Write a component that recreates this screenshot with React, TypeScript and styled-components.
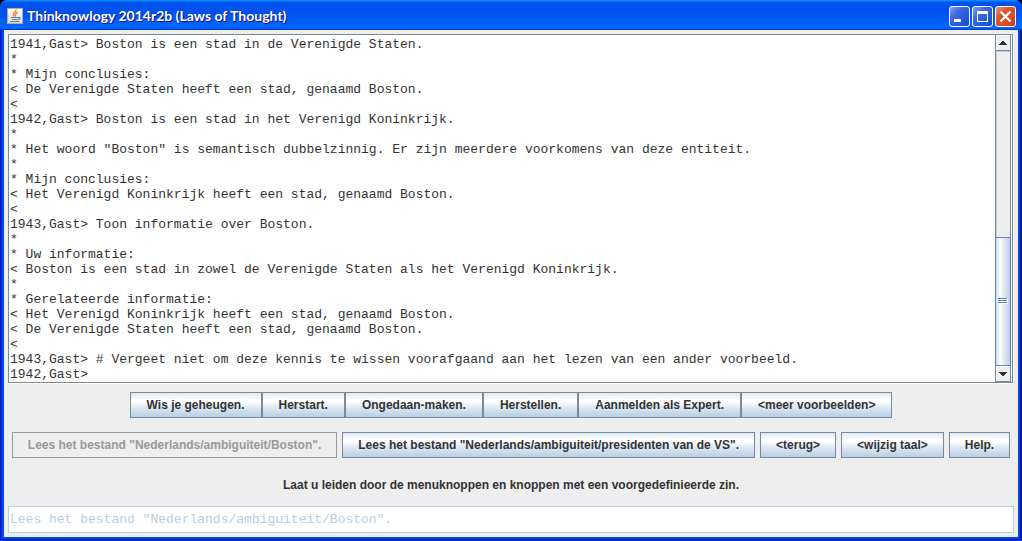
import React from "react";
import styled, { createGlobalStyle, css } from "styled-components";

const GlobalStyle = createGlobalStyle`
  *, *::before, *::after { box-sizing: border-box; }
  body { margin: 0; background: #000; }
`;

const mono = css`
  font-family: "Liberation Mono", "Courier New", monospace;
  font-size: 13px;
  line-height: 15px;
`;

const sans = css`
  font-family: "Liberation Sans", Arial, sans-serif;
  font-size: 12px;
  font-weight: 700;
  line-height: 16px;
`;

const Frame = styled.div`
  display: flex;
  flex-direction: column;
  min-height: 100vh;
  padding: 0 4px 4px;
  border-radius: 7px 7px 0 0;
  overflow: hidden;
  background: #0046e6;
  box-shadow: inset 1px 0 #0019cf, inset 2px -1px #0831d9, inset -1px -1px #00138c, inset -2px -2px #001ea0;
`;

const TitleBar = styled.header`
  display: flex;
  align-items: center;
  gap: 4px;
  height: 30px;
  margin: 0 -4px;
  padding: 2px 6px 0 7px;
  background: linear-gradient(
    #0997ff 0,
    #0053ee 8%,
    #0050ee 40%,
    #0066ff 88%,
    #0066ff 93%,
    #005bff 95%,
    #003dd7 96%,
    #003dd7 100%
  );
`;

const Title = styled.h1`
  flex: 1;
  margin: 0;
  font-family: "Trebuchet MS", Lato, sans-serif;
  font-size: 14px;
  font-weight: 700;
  line-height: 20px;
  color: #fff;
  text-shadow: 1px 1px #0f1089;
`;

const WindowControls = styled.div`
  display: flex;
  gap: 2px;
`;

const ControlButton = styled.button<{ $close?: boolean }>`
  display: grid;
  place-items: center;
  width: 21px;
  height: 21px;
  padding: 0;
  border: 1px solid #fff;
  border-radius: 3px;
  background: ${({ $close }) =>
    $close
      ? "linear-gradient(135deg, #ee9478 0, #e0532f 35%, #dc4a20 70%, #c23a10)"
      : "linear-gradient(135deg, #7fa2f2 0, #3a68e0 35%, #2459dc 70%, #1a4cc8)"};
`;

const Content = styled.main`
  display: flex;
  flex: 1;
  flex-direction: column;
  padding: 4px;
  background: #eee;
`;

const LogPane = styled.section`
  display: flex;
  flex: 1;
  margin-right: 1px;
  border: 1px solid #7a8a99;
  background: #fff;
  box-shadow: 1px 1px #fff;
`;

const LogText = styled.pre`
  ${mono}
  flex: 1;
  margin: 0;
  padding: 2px 1px 0;
  overflow: hidden;
  color: #333;
`;

const ScrollBar = styled.div`
  display: flex;
  flex-direction: column;
  width: 16px;
  margin-right: 1px;
  border: solid #7a8a99;
  border-width: 0 1px;
  background: #eee;
`;

const ScrollArrow = styled.button`
  display: grid;
  place-items: center;
  height: 16px;
  padding: 0;
  border: 0 solid #7a8a99;
  border-bottom-width: 1px;
  background: #eee;
  box-shadow: inset 1px 1px #fff;
`;

const ScrollTrack = styled.div`
  display: flex;
  flex: 1;
  flex-direction: column;
  justify-content: flex-end;
  box-shadow: inset 1px 1px #b8cfe5;
`;

const ScrollThumb = styled.div`
  display: grid;
  place-items: center;
  height: 41%;
  margin: 0 -1px;
  border: 1px solid #6382bf;
  background: linear-gradient(90deg, #c8ddf2, #fff 30%, #dce8f3 60%, #b8cfe5);
`;

const MetalButton = styled.button`
  ${sans}
  height: 26px;
  padding: 0 16px;
  border: 1px solid #7a8a99;
  background: linear-gradient(#dde8f3, #fff 30%, #fff 35%, #dde8f3 60%, #b8cfe5);
  color: #333;
  white-space: nowrap;

  &:disabled {
    border-color: #999;
    background: #eee;
    color: #999;
  }
`;

const ButtonRow = styled.div<{ $spaced?: boolean }>`
  display: flex;
  justify-content: center;
  gap: ${({ $spaced }) => ($spaced ? 5 : 0)}px;

  ${MetalButton} {
    padding: 0 ${({ $spaced }) => ($spaced ? 15 : 16)}px;
  }
`;

const Controls = styled.div`
  display: flex;
  flex-direction: column;
  gap: 14px;
  padding: 9px 0 13px;
`;

const Hint = styled.label`
  ${sans}
  margin-top: 5px;
  text-align: center;
  color: #333;
`;

const SentenceInput = styled.input`
  ${mono}
  width: 100%;
  height: 27px;
  padding: 0 1px;
  border: 1px solid #b8cfe5;
  background: #fff;
  color: #b8cfe5;
`;

const LOG = `1941,Gast> Boston is een stad in de Verenigde Staten.
*
* Mijn conclusies:
< De Verenigde Staten heeft een stad, genaamd Boston.
<
1942,Gast> Boston is een stad in het Verenigd Koninkrijk.
*
* Het woord "Boston" is semantisch dubbelzinnig. Er zijn meerdere voorkomens van deze entiteit.
*
* Mijn conclusies:
< Het Verenigd Koninkrijk heeft een stad, genaamd Boston.
<
1943,Gast> Toon informatie over Boston.
*
* Uw informatie:
< Boston is een stad in zowel de Verenigde Staten als het Verenigd Koninkrijk.
*
* Gerelateerde informatie:
< Het Verenigd Koninkrijk heeft een stad, genaamd Boston.
< De Verenigde Staten heeft een stad, genaamd Boston.
<
1943,Gast> # Vergeet niet om deze kennis te wissen voorafgaand aan het lezen van een ander voorbeeld.
1942,Gast>`;

const ACTIONS = [
  "Wis je geheugen.",
  "Herstart.",
  "Ongedaan-maken.",
  "Herstellen.",
  "Aanmelden als Expert.",
  "<meer voorbeelden>",
];

const EXAMPLES = [
  { label: 'Lees het bestand "Nederlands/ambiguiteit/Boston".', disabled: true },
  { label: 'Lees het bestand "Nederlands/ambiguiteit/presidenten van de VS".' },
  { label: "<terug>" },
  { label: "<wijzig taal>" },
  { label: "Help." },
];

function JavaIcon() {
  return (
    <svg width="16" height="16" viewBox="0 0 16 16" aria-hidden="true">
      <defs>
        <linearGradient id="tile" x1="0" y1="0" x2="0" y2="1">
          <stop offset="0" stopColor="#fff" />
          <stop offset="1" stopColor="#dcdcdc" />
        </linearGradient>
      </defs>
      <rect x="0.5" y="0.5" width="15" height="15" fill="url(#tile)" stroke="#b4aca0" />
      <path d="M9 1.500C9.500 4 4.500 5 7 8.500M10.500 4C7.500 5.500 9.500 6.500 8 8.500" fill="none" stroke="#ee8a35" strokeWidth="1.500" />
      <path d="M4 9.500h7M5 11.500h5.500M3 13.500h9.500M11 9.500c3-.5 2.500 1.500 0 2" fill="none" stroke="#5a7f9f" strokeWidth="1.100" />
    </svg>
  );
}

function Arrow({ down }: { down?: boolean }) {
  return (
    <svg width="8" height="4" viewBox="0 0 8 4" shapeRendering="crispEdges" aria-hidden="true">
      <path d={down ? "M0 0h8v1H7v1H6v1H5v1H3V3H2V2H1V1H0z" : "M0 4h8V3H7V2H6V1H5V0H3v1H2v1H1v1H0z"} fill="#333" />
    </svg>
  );
}

export default function App() {
  return (
    <>
      <GlobalStyle />
      <Frame>
        <TitleBar>
          <JavaIcon />
          <Title>Thinknowlogy 2014r2b (Laws of Thought)</Title>
          <WindowControls>
            <ControlButton aria-label="Minimize">
              <svg width="19" height="19" aria-hidden="true">
                <path d="M4 12h7v3H4z" fill="#fff" />
              </svg>
            </ControlButton>
            <ControlButton aria-label="Maximize">
              <svg width="19" height="19" aria-hidden="true">
                <path fillRule="evenodd" d="M4 4h11v11H4zM5 7v7h9V7z" fill="#fff" />
              </svg>
            </ControlButton>
            <ControlButton $close aria-label="Close">
              <svg width="19" height="19" aria-hidden="true">
                <path d="M4.500 4.500l10 10M14.500 4.500l-10 10" stroke="#fff" strokeWidth="2.400" />
              </svg>
            </ControlButton>
          </WindowControls>
        </TitleBar>
        <Content>
          <LogPane>
            <LogText>{LOG}</LogText>
            <ScrollBar>
              <ScrollArrow aria-label="Scroll up">
                <Arrow />
              </ScrollArrow>
              <ScrollTrack>
                <ScrollThumb>
                  <svg width="10" height="6" shapeRendering="crispEdges" aria-hidden="true">
                    <path d="M0 0h9v1H0zM0 2h9v1H0zM0 4h9v1H0z" fill="#6382bf" />
                    <path d="M1 1h9v1H1zM1 3h9v1H1zM1 5h9v1H1z" fill="#fff" />
                  </svg>
                </ScrollThumb>
              </ScrollTrack>
              <ScrollArrow aria-label="Scroll down">
                <Arrow down />
              </ScrollArrow>
            </ScrollBar>
          </LogPane>
          <Controls>
            <ButtonRow>
              {ACTIONS.map((label) => (
                <MetalButton key={label}>{label}</MetalButton>
              ))}
            </ButtonRow>
            <ButtonRow $spaced>
              {EXAMPLES.map(({ label, disabled }) => (
                <MetalButton key={label} disabled={disabled}>
                  {label}
                </MetalButton>
              ))}
            </ButtonRow>
            <Hint htmlFor="sentence">
              Laat u leiden door de menuknoppen en knoppen met een voorgedefinieerde zin.
            </Hint>
          </Controls>
          <SentenceInput
            id="sentence"
            readOnly
            value={'Lees het bestand "Nederlands/ambiguiteit/Boston".'}
          />
        </Content>
      </Frame>
    </>
  );
}
